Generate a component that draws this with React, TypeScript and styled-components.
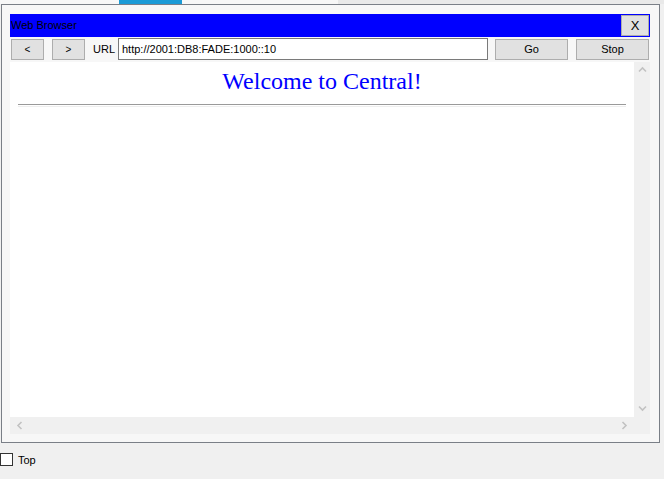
import React from "react";
import styled, { createGlobalStyle } from "styled-components";

const Global = createGlobalStyle`
  html, body { margin: 0; padding: 0; background: #f0f0f0; }
  body { font-family: "Liberation Sans", Arial, sans-serif; font-size: 11px; color: #000; }
  #root { width: 664px; height: 479px; overflow: hidden; }
`;

const TopStrip = styled.div`
  display: flex;
  height: 4px;
`;
const StripPart = styled.div<{ $w: number; $c: string }>`
  width: ${(p) => p.$w}px;
  flex: ${(p) => (p.$w ? "none" : "1")};
  background: ${(p) => p.$c};
`;

const Frame = styled.div`
  margin-left: 1px;
  width: 640px;
  height: 428px;
  border: 1px solid #7a7f87;
  background: #f7f7f7;
  padding: 9px 9px 0 8px;
  box-sizing: content-box;
  display: flex;
  flex-direction: column;
`;

const TitleBar = styled.div`
  height: 23px;
  background: #0000ff;
  display: flex;
  align-items: center;
  justify-content: space-between;
  padding-left: 1px;
`;
const TitleText = styled.span`
  font-size: 11px;
  color: #000;
  line-height: 1;
`;
const BtnBase = styled.button<{ $w: number }>`
  width: ${(p) => p.$w}px;
  height: 21px;
  box-sizing: border-box;
  border: 1px solid #adadad;
  background: #e1e1e1;
  font-family: "Liberation Sans", Arial, sans-serif;
  font-size: 11px;
  color: #000;
  padding: 0;
  margin: 0;
  display: flex;
  align-items: center;
  justify-content: center;
`;
const CloseBtn = styled(BtnBase)`
  margin-right: 1px;
  font-size: 13px;
`;

const Toolbar = styled.div`
  height: 22px;
  margin-top: 1px;
  display: flex;
  align-items: center;
  padding-left: 1px;
`;
const NavBtn = styled(BtnBase)`
  font-size: 10px;
  margin-right: 8px;
`;
const UrlLabel = styled.span`
  width: 25px;
  font-size: 11px;
`;
const UrlInput = styled.div`
  width: 370px;
  height: 22px;
  box-sizing: border-box;
  border: 1px solid #7a7a7a;
  background: #fff;
  display: flex;
  align-items: center;
  padding-left: 3px;
  font-size: 11px;
  margin-right: 7px;
`;
const ActBtn = styled(BtnBase)`
  margin-right: 8px;
`;

const ContentGrid = styled.div`
  margin-top: 2px;
  height: 372px;
  display: grid;
  grid-template-columns: 624px 16px;
  grid-template-rows: 355px 17px;
`;
const Page = styled.div`
  background: #fff;
  padding: 0 8px;
  display: flex;
  flex-direction: column;
`;
const Heading = styled.h1`
  margin: 5px 0 0 0;
  font-family: "Liberation Serif", "Times New Roman", serif;
  font-weight: normal;
  font-size: 24px;
  line-height: 29px;
  color: #0000ff;
  text-align: center;
`;
const Rule = styled.div`
  margin-top: 8px;
  height: 1px;
  border-top: 1px solid #9a9a9a;
  border-bottom: 1px solid #eeeeee;
`;
const VScroll = styled.div`
  background: #f0f0f0;
  display: flex;
  flex-direction: column;
  justify-content: space-between;
  align-items: center;
  padding: 3px 0 4px;
`;
const HScroll = styled.div`
  background: #f0f0f0;
  display: flex;
  justify-content: space-between;
  align-items: center;
  padding: 0 5px 0 5px;
`;
const Corner = styled.div`
  background: #f0f0f0;
`;

const Footer = styled.div`
  margin-top: 10px;
  display: flex;
  align-items: center;
  gap: 5px;
`;
const Check = styled.div`
  width: 13px;
  height: 13px;
  box-sizing: border-box;
  border: 1px solid #333;
  background: #fff;
`;
const CheckLabel = styled.span`
  font-size: 11px;
`;

const Chev = ({ dir }: { dir: "up" | "down" | "left" | "right" }) => {
  const rot = { up: 0, right: 90, down: 180, left: 270 }[dir];
  return (
    <svg width="9" height="9" viewBox="0 0 9 9" style={{ transform: `rotate(${rot}deg)` }}>
      <path d="M1 6.5 L4.5 3 L8 6.5" fill="none" stroke="#c2c2c2" strokeWidth="1.6" />
    </svg>
  );
};

export default function App() {
  return (
    <>
      <Global />
      <TopStrip>
        <StripPart $w={119} $c="#f7f7f7" />
        <StripPart $w={63} $c="#1a9ad6" />
        <StripPart $w={156} $c="#f7f7f7" />
        <StripPart $w={0} $c="#e9e9e9" />
      </TopStrip>
      <Frame>
        <TitleBar>
          <TitleText>Web Browser</TitleText>
          <CloseBtn $w={28}>X</CloseBtn>
        </TitleBar>
        <Toolbar>
          <NavBtn $w={33}>&lt;</NavBtn>
          <NavBtn $w={33}>&gt;</NavBtn>
          <UrlLabel>URL</UrlLabel>
          <UrlInput>http://2001:DB8:FADE:1000::10</UrlInput>
          <ActBtn $w={73}>Go</ActBtn>
          <BtnBase $w={73}>Stop</BtnBase>
        </Toolbar>
        <ContentGrid>
          <Page>
            <Heading>Welcome to Central!</Heading>
            <Rule />
          </Page>
          <VScroll>
            <Chev dir="up" />
            <Chev dir="down" />
          </VScroll>
          <HScroll>
            <Chev dir="left" />
            <Chev dir="right" />
          </HScroll>
          <Corner />
        </ContentGrid>
      </Frame>
      <Footer>
        <Check />
        <CheckLabel>Top</CheckLabel>
      </Footer>
    </>
  );
}
